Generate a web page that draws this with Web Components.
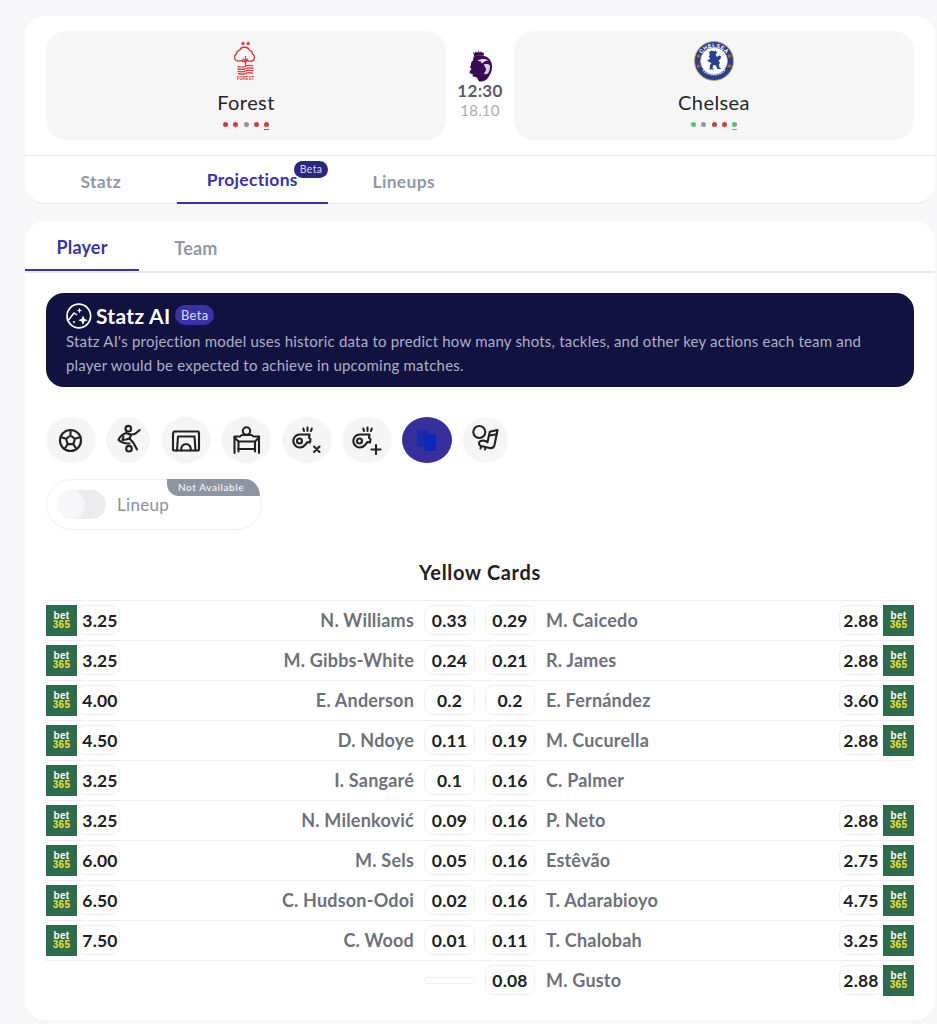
<!DOCTYPE html>
<html><head><meta charset="utf-8"><title>Forest v Chelsea</title>
<style>
html,body{margin:0;padding:0;background:#f7f7f9}
body{font-family:Lato,"Noto Sans",sans-serif;color:#222;width:937px;height:1024px;overflow:hidden}
main{display:flex;flex-direction:column;gap:17px;padding:16px 2px 0 25px;box-sizing:border-box}
</style></head><body>
<main>
<match-card></match-card>
<proj-card></proj-card>
</main>
<script>
function def(n,render){customElements.define(n,class extends HTMLElement{constructor(){super();this.attachShadow({mode:'open'}).innerHTML=render(this)}})}

const star=(x,y)=>`<path d="M${x} ${y-2.2}l.7 1.500 1.700.2-1.200 1.100.3 1.700-1.500-.8-1.500.8.3-1.700-1.200-1.100 1.700-.2z"/>`;
const CRESTS={
forest:`<svg width="24" height="42" viewBox="234 40 24 42">
<g fill="#d23a3a">${star(243,43.2)}${star(248.2,43.2)}</g>
<path d="M245.500 47.200c2 0 3.200 1.300 3.900 3 2 .6 3 2 3.100 3.600 1.600 1 2.200 2.500 1.900 4-.4 2.200-2.200 3.400-4.500 3.300-1.200 0-2.300-.4-3-.9l-.4 1.300h-2l-2 0-.4-1.300c-.7.5-1.800.9-3 .9-2.300.1-4.100-1.100-4.500-3.300-.3-1.500.3-3 1.900-4 .1-1.600 1.100-3 3.100-3.600.7-1.700 1.900-3 3.900-3z" fill="none" stroke="#d23a3a" stroke-width="1.400"/>
<path d="M245.500 56v10M243 58.500l2.500 3.200 2.500-3.200" fill="none" stroke="#d23a3a" stroke-width="1.200"/>
<g fill="none" stroke="#d23a3a" stroke-width="1.200"><path d="M237.500 66.200q4 1.600 8 0t8 0M237.500 68.600q4 1.600 8 0t8 0M237.500 71q4 1.600 8 0t8 0M238 73.400q3.750 1.600 7.500 0t7.500 0"/></g>
<text transform="translate(245.500 79.800) scale(.7 1)" text-anchor="middle" font-family="Liberation Sans" font-size="6" font-weight="700" fill="#d23a3a">FOREST</text>
</svg>`,
chelsea:`<svg width="42" height="42" viewBox="692 40 42 42">
<circle cx="713" cy="61" r="19.500" fill="#27408f" stroke="#c9a85a" stroke-width="1"/>
<circle cx="713" cy="61" r="13.500" fill="#fff" stroke="#c9a85a" stroke-width=".8"/>
<circle cx="697.500" cy="56" r="1.600" fill="#d8543f"/><circle cx="728.500" cy="56" r="1.600" fill="#d8543f"/><circle cx="697.500" cy="66" r="1.600" fill="#d8543f"/><circle cx="728.500" cy="66" r="1.600" fill="#d8543f"/>
<path id="ct" d="M699 57a15 15 0 0 1 28 0" fill="none"/>
<text font-family="Liberation Sans" font-size="5.500" font-weight="700" fill="#fff" letter-spacing=".4"><textPath href="#ct" startOffset="50%" text-anchor="middle">CHELSEA</textPath></text>
<path d="M707.500 52l3.500-1.500 2 1 2-1 1 2.500-1.500 1.500 1.500 2.500 2-1.500 2 .5-.5 3-2 1.500 1.500 2.500-1 1.500.5 3 2 1.500h-4l-1.500-3.500-2.500-.5-1 3 2 1.500h-5l.5-4.500 1.500-2-2.500-1-2.500-2.500 2.500.5 1-2-1.500-1.500 1.500-1.500-1-2 1-.5z" fill="#27408f"/>
<path d="M702 70a15 15 0 0 0 22 0" fill="none" stroke="#cfd6ea" stroke-width="1.600" stroke-dasharray="1.500 .8"/>
</svg>`};

def('team-card',h=>{
 const c=h.getAttribute('crest'),form=h.getAttribute('form').split('');
 const col={w:'#5bc26a',l:'#d63b3b',d:'#9297a6'};
 return `<style>:host{display:flex;flex:1 1 0;flex-direction:column;align-items:center;background:#f6f6f7;border-radius:20px;height:109px;box-sizing:border-box;padding-top:9px}
 .crest{height:42px;display:block}
 svg{display:block}
 .name{font-size:20px;line-height:26px;margin-top:7px;color:#262626;letter-spacing:.42px}
 .form{display:flex;gap:5.200px;margin-top:7px}
 .form i{display:block;width:5px;height:5px;border-radius:50%;position:relative}
 .form i:last-child::after{content:"";position:absolute;left:0;right:0;top:7px;height:1px;background:inherit}
 </style><div class="crest">${CRESTS[c]}</div><div class="name">${h.getAttribute('name')}</div>
 <div class="form">${form.map(f=>`<i style="background:${col[f]}"></i>`).join('')}</div>`});

def('match-time',()=>`<style>:host{display:flex;flex:0 0 68px;flex-direction:column;align-items:center;padding-top:20px;box-sizing:border-box}
 svg{display:block;margin-bottom:-1px}
 .t{font-size:17px;font-weight:700;line-height:20px;color:#575c66;letter-spacing:.3px}.d{font-size:15px;line-height:18px;color:#a8adba;letter-spacing:.2px}</style>
 <svg width="26" height="31" viewBox="467 51 26 31">
 <path d="M473 52l1.500 1.200 1.200-1.700 1.500 1.300 1.300-1.800 1.300 1.700 1.300-1.400 1 1.700 1.500-.9.400 3.400-9.800.6z" fill="#3a0b52"/>
 <path d="M473.500 56.500c4-1.300 9-1.500 13 .3 3.500 1.700 5.500 5.500 5.500 9.700 0 3.500-.8 6-2 8-1.300 2.500-2.500 4.500-4.500 5.800-2 1.100-4.500 1.400-6.500 1.200-1-2.500-2-4-3.500-4.500l-2.500-.5c-.8-.8-.3-1.600-.3-2.500l-2.700-.5c-1-1.800-.2-3 1.500-4.200-.6-1.200-1.800-1.600-1.200-3 .8-1 1-2.400.8-3.700.3-.9 1-1.600 1.900-2.100z" fill="#3a0b52"/>
 <path d="M477.500 60.500c3.500-2 8-2.200 11.500 0-2.500 0-4.500.5-6 2.300l-2 .6c.5-1 .3-1.700-.5-2.200-1 .1-2 .1-3-.7z" fill="#e7dff0"/><path d="M484 64.500c2-.7 4.500-.5 6 1 .2 3-.5 6-2 8l-3 1c-1-.7-1-1.700 0-2.500.8-1 1-2.200 1-3.500-.8-1.300-1.700-2.300-2-4z" fill="#d9cfe6"/>
 </svg>
 <div class="t">12:30</div><div class="d">18.10</div>`);

def('match-tabs',()=>`<style>:host{display:flex;border-top:1px solid #ececef;box-sizing:border-box;height:49px}
 .tab{flex:0 0 151.500px;display:flex;align-items:center;justify-content:center;box-sizing:border-box;font-size:17.500px;font-weight:700;color:#9298a8;letter-spacing:.3px;padding-top:3px;position:relative}
 .on{color:#3a33a5;border-bottom:2px solid #3a33a5;padding-top:0}
 .b{position:absolute;right:0;top:5px;background:#2a2780;color:#d8d8f0;font-size:10.500px;font-weight:400;line-height:17px;height:17px;padding:0 5.500px;border-radius:9px;letter-spacing:.4px}
 </style><div class="tab">Statz</div><div class="tab on">Projections<span class="b">Beta</span></div><div class="tab">Lineups</div>`);

def('match-card',()=>`<style>:host{display:block;background:#fff;border-radius:20px;height:188px;width:910px;box-sizing:border-box;border-bottom:1px solid #e9e9ee}
 .top{display:flex;height:139px;padding:15px 21px 0;box-sizing:border-box}</style>
 <div class="top"><team-card name="Forest" crest="forest" form="lldll"></team-card><match-time></match-time><team-card name="Chelsea" crest="chelsea" form="wdllw"></team-card></div>
 <match-tabs></match-tabs>`);

def('sub-tabs',()=>`<style>:host{display:flex;height:50px;border-bottom:2px solid #e9e9ee;box-sizing:content-box}
 .t{flex:0 0 114px;height:50px;display:flex;align-items:center;justify-content:center;font-size:18px;font-weight:700;color:#9298a8;box-sizing:border-box;letter-spacing:.2px;padding-top:4px}
 .on{color:#3a33a5;border-bottom:2px solid #3a33a5;padding-top:4px}</style><div class="t on">Player</div><div class="t">Team</div>`);

def('ai-banner',()=>`<style>:host{display:block;background:#11123f;border-radius:18px;height:94px;box-sizing:border-box;padding:10px 20px 0;color:#fff}
 .h{display:flex;align-items:center;height:26px}
 svg{display:block;flex:none}
 .n{font-size:21px;font-weight:700;margin-left:4px;letter-spacing:.3px;margin-top:-2px}
 .b{background:#3a33a5;color:#dcdcf5;font-size:13px;line-height:20px;height:20px;padding:0 5.500px;border-radius:10px;margin-left:5px;letter-spacing:.3px;margin-top:-2px}
 p{margin:0;font-size:15px;line-height:24px;color:#adb0c6;letter-spacing:.21px;white-space:nowrap}</style>
 <div class="h"><svg width="26" height="26" viewBox="65.500 303 26 26"><circle cx="78.300" cy="316" r="11.800" fill="none" stroke="#fff" stroke-width="1.700"/>
 <path d="M68 320l5.500-7 3 2" fill="none" stroke="#fff" stroke-width="1.500"/><path d="M82.500 315.500l1.400 3.300 3.300 1.400-3.300 1.400-1.400 3.300-1.400-3.300-3.300-1.400 3.300-1.400z" fill="#fff"/><path d="M79 307.800l.8 1.900 1.900.8-1.900.8-.8 1.900-.8-1.900-1.900-.8 1.900-.8z" fill="#fff"/><circle cx="73.500" cy="322" r="1" fill="#fff"/></svg>
 <span class="n">Statz AI</span><span class="b">Beta</span></div>
 <p>Statz AI's projection model uses historic data to predict how many shots, tackles, and other key actions each team and<br>player would be expected to achieve in upcoming matches.</p>`);

const S='fill="none" stroke="#222" stroke-width="2.100" stroke-linecap="round" stroke-linejoin="round"';
const whistle=`<path d="M309.500 434.500h-10a6.500 6.500 0 1 0 5.500 10.500l2.500-3 2.500.5.500-3.500-1.500-1z" transform="translate(OX 0)" ${S}/><circle cx="299.500" cy="441" r="2.500" transform="translate(OX 0)" ${S}/><path d="M304 431l-.7-2.500M307.500 431v-3.500M311 431l.8-2.500" transform="translate(OX 0)" ${S}/>`;
const ICONS={
ball:[50,`<g ${S}><circle cx="70.500" cy="440.500" r="10.500"/><path d="M70.500 435.500l4.500 3.300-1.700 5.300h-5.600l-1.700-5.300zM70.500 435.500v-5.500M75 438.800l5.500-1.800M73.300 444.100l3 4.700M67.700 444.100l-3 4.700M66 438.800l-5.500-1.800"/></g>`],
kick:[44,`<g ${S}><circle cx="128.300" cy="428.700" r="2.800"/><circle cx="129" cy="448.700" r="2.800"/><path d="M139.700 430l-4.500 3.800c-3 1.300-6 .7-9.200-.8-3.500 1.500-6.500 4-7.500 6.800 2.500 2.700 6.500 4 11 3.700"/><path d="M131 435l-1.500 3.500 4 4.500 3.500 6.500"/><path d="M123.500 436.500l-1 3.500 3.500-.5 3.500-1"/></g>`],
goal:[50,`<g ${S}><path d="M174 431.500h24.500l.5 2v15.500c0 1-.5 1.500-1.500 1.500h-23c-1 0-1.500-.5-1.500-1.500v-15.500z"/><path d="M178 436.500h16.500l1 14M178 436.500l-1 14"/><path d="M181.500 450.500a4.800 4.800 0 1 1 9 0"/></g>`],
keeper:[50,`<g ${S}><circle cx="246.500" cy="431" r="3.700"/><path d="M234.500 453v-16.500h5.500l2-1.500h9.500l2 1.500h5.500v16.500"/><path d="M238.500 451.500v-10h16.500v10M238 449h17M234.500 437.500l4 4M259 437.500l-4 4"/></g>`],
wx:[50,whistle.replaceAll('OX',0)+`<path d="M314 446.500l5.500 5.500M319.500 446.500l-5.500 5.500" ${S}/>`],
wp:[50,whistle.replaceAll('OX',60)+`<path d="M376 445v9M371.500 449.500h9" ${S}/>`],
cards:[50,`<rect x="418" y="430" width="12" height="17" rx="1.500" fill="#1c2aa8"/><rect x="425.500" y="434" width="11.500" height="17" rx="1.500" fill="#0a28bb"/>`],
mix:[45,`<g ${S}><circle cx="479.300" cy="432" r="6"/><path d="M489.800 431.800l7.700-1.800-3 15c-.7 2.500-2.500 3.600-5 3l-8.500-2c-2.500-1-2.700-4-.5-5 2.500-.7 5.500-.2 7 1.300z"/><path d="M489.500 435.500l7.300-1.300"/><path d="M481 447l-.5 1.500M485.500 448l-.5 1.500"/></g>`]};
const POS={ball:[46,417],kick:[106,417],goal:[161,417],keeper:[221,417],wx:[282,417],wp:[342,417],cards:[403,417],mix:[463,417]};

def('stat-icon',h=>{const k=h.getAttribute('k'),[w,s]=ICONS[k],[x,y]=POS[k];
 return `<style>:host{display:block;width:${w}px;height:46px;border-radius:50%;background:${h.hasAttribute('on')?'#372f9c':'#f5f5f6'}}svg{display:block}</style>
 <svg width="${w}" height="46" viewBox="${x} ${y} ${w} 46">${s}</svg>`});

def('lineup-toggle',()=>`<style>:host{display:flex;align-items:center;position:relative;width:216px;height:51px;box-sizing:border-box;border:1px solid #efeff2;border-radius:26px;padding-left:10px}
 .sw{width:49px;height:29px;border-radius:15px;background:#ececee;position:relative;flex:none}
 .sw::before{content:"";position:absolute;left:0;top:0;width:28px;height:29px;border-radius:50%;background:#f6f6f8}
 .l{font-size:17px;color:#8d919b;margin-left:11px;letter-spacing:.3px}
 .na{position:absolute;top:-1px;right:1px;width:93px;height:17px;box-sizing:border-box;background:#8f94a3;color:#fff;font-size:10px;line-height:17px;padding-left:11px;border-radius:0 15px 0 12px / 0 17px 0 12px;letter-spacing:.6px;white-space:nowrap}
 </style><div class="sw"></div><span class="l">Lineup</span><span class="na">Not Available</span>`);

def('bet-logo',()=>`<style>:host{display:flex;flex-direction:column;align-items:center;justify-content:center;width:31px;height:31px;background:#2f6b4e;font-family:"Liberation Sans",sans-serif;font-weight:700;font-size:10px;line-height:9px;flex:none;letter-spacing:.3px}
 .a{color:#fff}.b{color:#f4e22c}</style><span class="a">bet</span><span class="b">365</span>`);

def('val-pill',h=>`<style>:host{display:flex;align-items:center;justify-content:center;box-sizing:border-box;border:1px solid #f0f0f2;border-radius:8px;height:${h.hasAttribute('empty')?'7px':'30px'};font-size:17.500px;font-weight:700;color:#222;letter-spacing:.2px}</style><slot></slot>`);

def('proj-row',h=>{const g=n=>h.getAttribute(n)||'';
 const lo=g('lo'),ro=g('ro'),lv=g('lv');
 return `<style>:host{display:grid;grid-template-columns:31px 43px 1fr 51px 10px 50px 1fr 44px 31px;align-items:center;height:40px;border-top:1px solid #efeff2;box-sizing:border-box;padding-bottom:1px}
 .n{font-size:18px;font-weight:700;color:#6d717b;letter-spacing:.2px;white-space:nowrap}
 .nl{grid-column:3;text-align:right;padding-right:10px}.lv{grid-column:4}.rv{grid-column:6}.nr{grid-column:7;padding-left:11px}.ro{grid-column:8}.rb{grid-column:9}.lb{grid-column:1}.lo{grid-column:2;padding-left:3px}
 </style>
 ${lo?`<bet-logo class="lb"></bet-logo><val-pill class="lo">${lo}</val-pill>`:''}
 <span class="n nl">${g('ln')}</span>
 ${lv?`<val-pill class="lv">${lv}</val-pill>`:`<val-pill class="lv" empty></val-pill>`}
 <val-pill class="rv">${g('rv')}</val-pill><span class="n nr">${g('rn')}</span>
 ${ro?`<val-pill class="ro">${ro}</val-pill><bet-logo class="rb"></bet-logo>`:''}`});

const ROWS=[["3.25","N. Williams","0.33","0.29","M. Caicedo","2.88"],["3.25","M. Gibbs-White","0.24","0.21","R. James","2.88"],["4.00","E. Anderson","0.2","0.2","E. Fernández","3.60"],["4.50","D. Ndoye","0.11","0.19","M. Cucurella","2.88"],["3.25","I. Sangaré","0.1","0.16","C. Palmer",""],["3.25","N. Milenković","0.09","0.16","P. Neto","2.88"],["6.00","M. Sels","0.05","0.16","Estêvão","2.75"],["6.50","C. Hudson-Odoi","0.02","0.16","T. Adarabioyo","4.75"],["7.50","C. Wood","0.01","0.11","T. Chalobah","3.25"],["","","","0.08","M. Gusto","2.88"]];

def('proj-card',()=>`<style>:host{display:block;background:#fff;border-radius:20px;height:799px;width:910px;box-sizing:border-box}
 .body{padding:20px 21px 0}
 .icons{display:flex;gap:10.400px;margin-top:30px}
 lineup-toggle{margin-top:16px}
 h2{font-size:20px;font-weight:700;color:#222;margin:0;text-align:center;line-height:24px;margin-top:30px;margin-bottom:16px;letter-spacing:.68px}
 </style><sub-tabs></sub-tabs><div class="body"><ai-banner></ai-banner>
 <div class="icons">${Object.keys(ICONS).map(k=>`<stat-icon k="${k}"${k=='cards'?' on':''}></stat-icon>`).join('')}</div>
 <lineup-toggle></lineup-toggle><h2>Yellow Cards</h2>
 ${ROWS.map(r=>`<proj-row lo="${r[0]}" ln="${r[1]}" lv="${r[2]}" rv="${r[3]}" rn="${r[4]}" ro="${r[5]}"></proj-row>`).join('')}
 </div>`);
</script>
</body></html>
